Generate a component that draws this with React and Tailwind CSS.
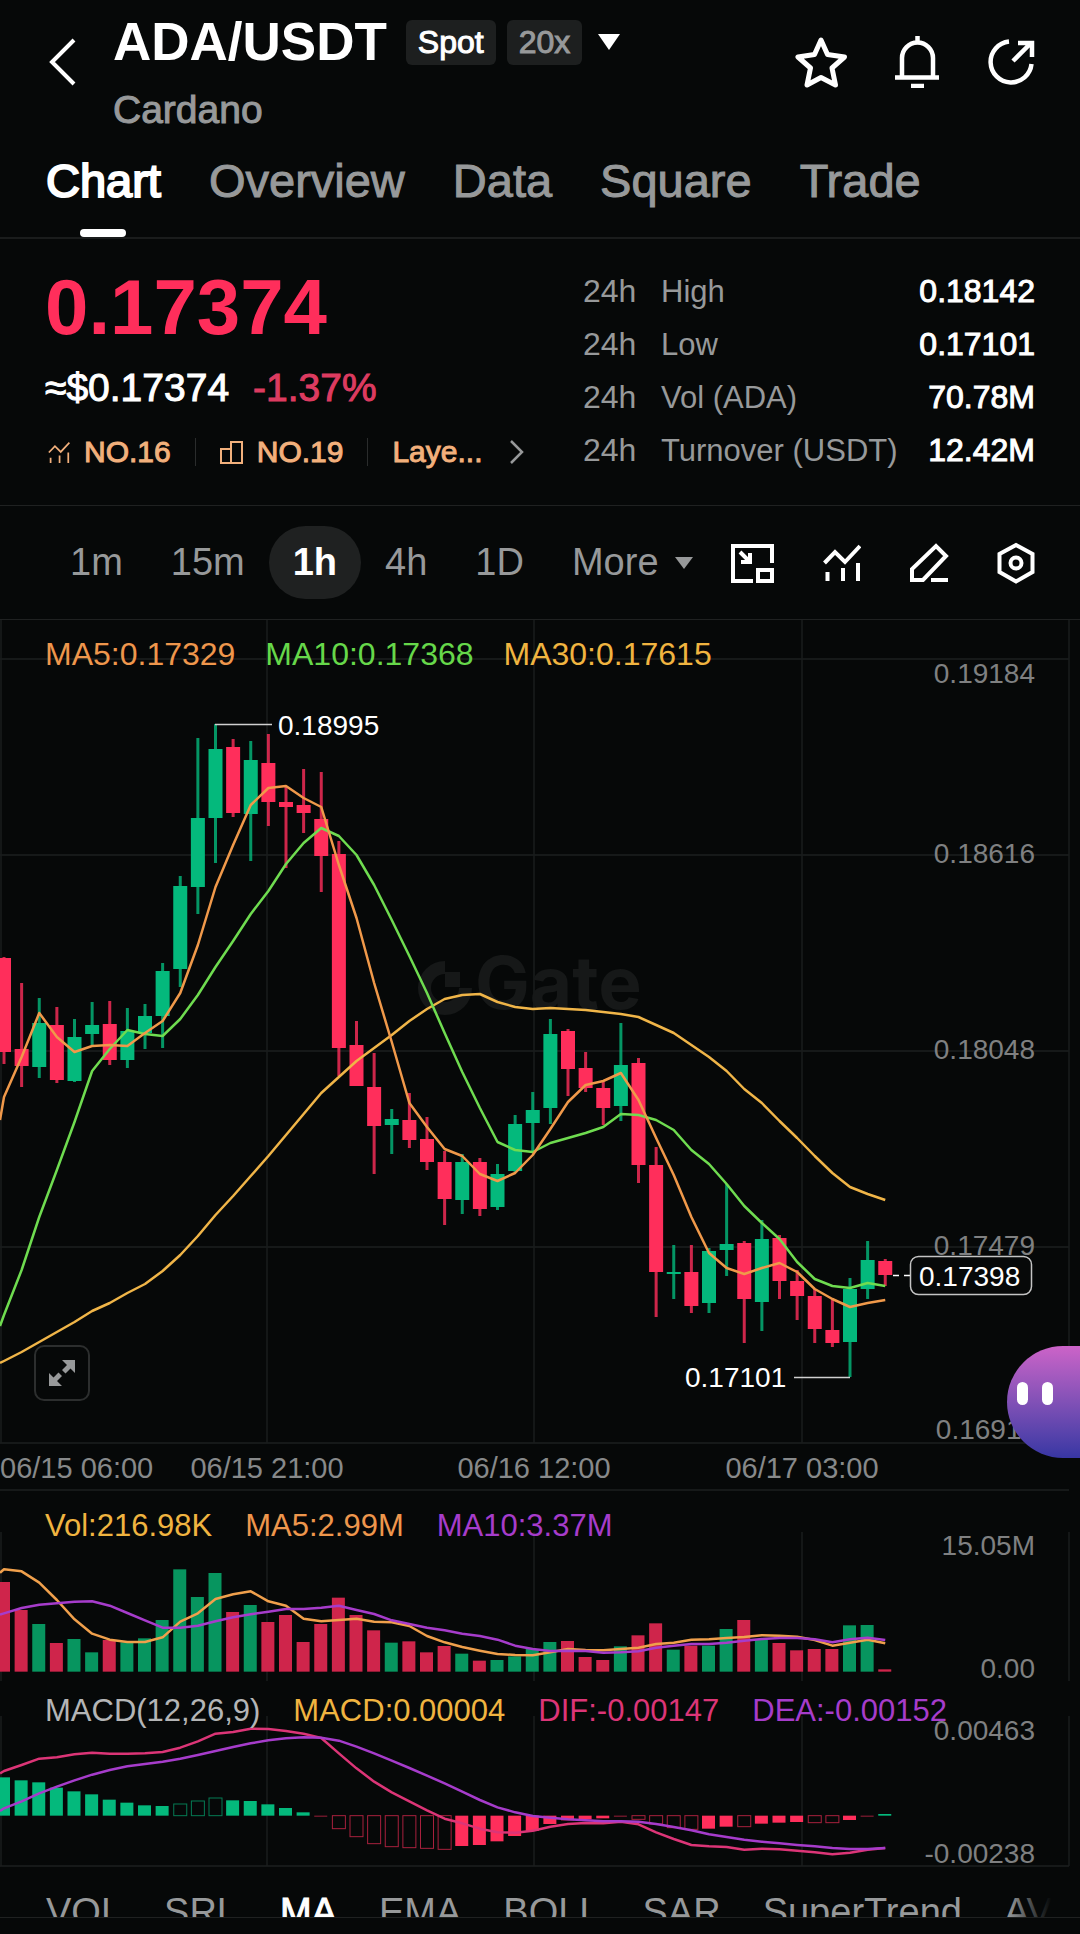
import { useState } from 'react'

const UP = '#04b97c'
const DOWN = '#ff2e5b'
const STEP = 17.625
const FIRST = 4

// [direction, high, body top, body bottom, low]
const candles = [
  ['d', 957, 958, 1052, 1064], ['d', 983, 1049, 1066, 1087], ['u', 998, 1023, 1067, 1078],
  ['d', 1007, 1025, 1080, 1083], ['u', 1019, 1037, 1081, 1082], ['u', 1002, 1025, 1034, 1045],
  ['d', 1001, 1024, 1060, 1065], ['u', 1008, 1031, 1060, 1068], ['u', 1004, 1016, 1033, 1049],
  ['u', 963, 971, 1016, 1048], ['u', 876, 886, 969, 987], ['u', 738, 818, 887, 914],
  ['u', 724, 749, 818, 863], ['d', 739, 747, 813, 817], ['u', 741, 760, 814, 861],
  ['d', 734, 763, 802, 826], ['d', 787, 802, 807, 868], ['d', 769, 805, 813, 833],
  ['d', 772, 819, 856, 892], ['d', 841, 854, 1048, 1076], ['d', 1021, 1045, 1086, 1086],
  ['d', 1053, 1087, 1126, 1174], ['u', 1109, 1119, 1125, 1154], ['d', 1093, 1120, 1140, 1148],
  ['d', 1117, 1139, 1162, 1170], ['d', 1151, 1162, 1199, 1225], ['u', 1154, 1162, 1200, 1214],
  ['d', 1158, 1162, 1209, 1216], ['u', 1164, 1174, 1207, 1210], ['u', 1115, 1124, 1171, 1172],
  ['u', 1092, 1110, 1123, 1153], ['u', 1019, 1034, 1108, 1124], ['d', 1029, 1031, 1069, 1096],
  ['d', 1052, 1068, 1088, 1092], ['d', 1082, 1088, 1108, 1125], ['u', 1023, 1065, 1106, 1121],
  ['d', 1058, 1063, 1165, 1183], ['d', 1147, 1165, 1272, 1317], ['u', 1245, 1272, 1274, 1299],
  ['d', 1245, 1272, 1306, 1313], ['u', 1248, 1251, 1303, 1313], ['u', 1184, 1244, 1250, 1276],
  ['d', 1241, 1243, 1299, 1343], ['u', 1220, 1239, 1302, 1331], ['d', 1235, 1238, 1281, 1299],
  ['d', 1270, 1281, 1296, 1320], ['d', 1289, 1296, 1329, 1343], ['d', 1298, 1330, 1343, 1347],
  ['u', 1278, 1289, 1342, 1377], ['u', 1241, 1260, 1289, 1299], ['d', 1259, 1261, 1275, 1286],
]

// each series starts with the point at the left edge
const ma5 = [1120, 1097, 1057, 1013, 1037, 1052, 1046, 1045, 1046, 1033, 1021, 993, 945, 887, 845, 805, 788, 786, 798, 807, 865, 918, 983, 1042, 1103, 1127, 1149, 1156, 1174, 1181, 1173, 1155, 1129, 1102, 1085, 1081, 1073, 1100, 1138, 1175, 1217, 1253, 1268, 1274, 1268, 1263, 1272, 1289, 1299, 1307, 1303, 1300]
const ma10 = [1326, 1315, 1270, 1217, 1170, 1122, 1071, 1049, 1030, 1034, 1036, 1019, 995, 967, 941, 914, 891, 864, 843, 828, 836, 855, 885, 920, 956, 993, 1033, 1072, 1108, 1142, 1150, 1152, 1143, 1138, 1133, 1127, 1114, 1115, 1120, 1130, 1150, 1164, 1184, 1206, 1223, 1239, 1262, 1279, 1286, 1288, 1283, 1286]
const ma30 = [1363, 1361, 1352, 1342, 1332, 1322, 1311, 1303, 1293, 1284, 1271, 1255, 1236, 1215, 1196, 1176, 1156, 1135, 1114, 1093, 1077, 1061, 1048, 1035, 1021, 1009, 999, 995, 994, 1002, 1007, 1009, 1008, 1009, 1010, 1012, 1014, 1017, 1025, 1033, 1045, 1057, 1071, 1089, 1103, 1121, 1138, 1156, 1173, 1187, 1194, 1200]

// the sub charts keep three units for one pixel
const volumes = [306, 390, 432, 489, 477, 517, 480, 487, 475, 420, 268, 351, 279, 396, 375, 426, 405, 486, 432, 353, 405, 451, 488, 484, 517, 498, 521, 542, 540, 529, 507, 486, 483, 531, 540, 499, 466, 430, 509, 497, 497, 447, 420, 478, 489, 511, 507, 507, 436, 435, 568]
const volMa5 = [278, 268, 274, 308, 360, 418, 461, 479, 486, 486, 472, 425, 400, 357, 343, 334, 364, 377, 416, 424, 420, 416, 425, 427, 438, 468, 487, 501, 512, 522, 525, 526, 517, 507, 510, 511, 507, 503, 492, 488, 479, 478, 474, 471, 466, 467, 470, 480, 497, 488, 479, 490]
const volMa10 = [404, 400, 384, 374, 370, 365, 364, 377, 399, 421, 443, 443, 437, 424, 412, 403, 395, 387, 387, 383, 377, 390, 402, 421, 432, 443, 451, 461, 468, 479, 497, 507, 513, 512, 513, 518, 517, 514, 503, 497, 492, 492, 488, 482, 477, 474, 474, 478, 487, 478, 473, 480]
const macd = [892, 901, 907, 923, 934, 943, 959, 968, 976, 978, 972, 963, 954, 961, 963, 973, 984, 997, 1010, 1046, 1070, 1091, 1100, 1103, 1105, 1108, 1098, 1095, 1084, 1068, 1053, 1032, 1021, 1018, 1015, 1010, 1018, 1032, 1043, 1048, 1046, 1040, 1040, 1031, 1028, 1026, 1028, 1028, 1020, 1010, 1002]
const hollow = [10, 11, 12, 19, 20, 21, 22, 23, 24, 25, 36, 37, 38, 39, 42, 46, 47]
const faint = [18, 35, 49]
const dif = [880, 873, 855, 836, 832, 823, 818, 821, 821, 820, 816, 803, 784, 761, 756, 746, 747, 753, 761, 774, 820, 865, 905, 937, 964, 991, 1016, 1030, 1046, 1057, 1058, 1052, 1040, 1032, 1029, 1030, 1025, 1033, 1057, 1077, 1095, 1099, 1101, 1109, 1106, 1108, 1112, 1117, 1123, 1118, 1109, 1104]
const dea = [993, 985, 964, 940, 920, 901, 884, 870, 859, 852, 845, 836, 825, 813, 801, 790, 781, 775, 772, 773, 782, 800, 820, 842, 864, 887, 910, 935, 960, 982, 997, 1008, 1013, 1018, 1021, 1024, 1024, 1025, 1032, 1041, 1051, 1063, 1071, 1079, 1085, 1090, 1095, 1099, 1104, 1107, 1107, 1104]

const gridX = [1, 267, 534, 802, 1069]

const cx = (i) => FIRST + i * STEP

const toPoints = (series, unit = 1) =>
  series.map((y, i) => `${i === 0 ? 0 : cx(i - 1)},${y / unit}`).join(' ')

function Line({ series, unit, color }) {
  return <polyline points={toPoints(series, unit)} fill="none" stroke={color} strokeWidth="2.5" strokeLinejoin="round" />
}

function VerticalGrid({ top, bottom }) {
  return gridX.map((x) => <line key={x} x1={x} x2={x} y1={top} y2={bottom} stroke="#1a1c1c" strokeWidth="1.5" />)
}

function AxisLabel({ y, children }) {
  return <text x="1035" y={y} textAnchor="end" fontSize="28" fill="#7f8081">{children}</text>
}

function Legend({ items, className }) {
  return (
    <div className={`absolute left-[45px] flex leading-10 whitespace-nowrap ${className}`}>
      {items.map(([text, color]) => (
        <span key={text} className={color}>{text}</span>
      ))}
    </div>
  )
}

function TrendIcon({ className, strokeWidth }) {
  return (
    <svg className={className} viewBox="0 0 38 38" fill="none" stroke="currentColor" strokeWidth={strokeWidth}>
      <path d="M1.5 19 12 8l10 10L37 2M4.5 28v9M20 24v13M35 19v18" />
    </svg>
  )
}

function Header() {
  return (
    <header className="flex items-start pt-[19px] pr-[45px] pl-[49px]">
      <button aria-label="Back" className="flex h-[86px] w-[64px] items-center">
        <svg className="h-[48px] w-[28px]" viewBox="0 0 28 48" fill="none" stroke="currentColor" strokeWidth="4">
          <path d="M25 2 3 24l22 22" />
        </svg>
      </button>
      <div className="flex-1">
        <button className="flex h-[46px] items-center gap-[11px]">
          <h1 className="mr-2 text-[53px] leading-[46px] font-bold">ADA/USDT</h1>
          <span className="rounded-md bg-[#1d1f1f] px-3 text-[32px] leading-[45px] [-webkit-text-stroke:1px]">Spot</span>
          <span className="rounded-md bg-[#1d1f1f] px-3 text-[32px] leading-[45px] text-[#97999a] [-webkit-text-stroke:1px]">20x</span>
          <svg className="ml-1 h-4 w-6" viewBox="0 0 24 16" fill="currentColor">
            <path d="M1 0h22L12 16z" />
          </svg>
        </button>
        <p className="mt-[21px] text-[39px] leading-[48px] text-[#97999a] [-webkit-text-stroke:1px]">Cardano</p>
      </div>
      <div className="flex h-[86px] items-center gap-[48px]">
        <button aria-label="Favorite">
          <svg className="h-[52px] w-[52px]" viewBox="0 0 52 52" fill="none" stroke="currentColor" strokeWidth="5" strokeLinejoin="round">
            <path d="M26 4l6.500 14.500 17 2.500-12.500 11 3.500 17L26 41.500 12 49l3.500-17L3 21l16.500-2.500z" />
          </svg>
        </button>
        <button aria-label="Alerts">
          <svg className="h-[52px] w-[44px]" viewBox="0 0 44 52" fill="none" stroke="currentColor" strokeWidth="4.500">
            <path d="M7 41V22a15.500 15.500 0 0 1 31 0v19M0 41.500h44M16 50h13M22.500 7V0" />
          </svg>
        </button>
        <button aria-label="Share">
          <svg className="h-[52px] w-[48px]" viewBox="0 0 48 52" fill="none" stroke="currentColor" strokeWidth="4.500">
            <path d="M22 5.500a20.500 20.500 0 1 0 22.500 22.500M26 25 43 8M31 7h14v14" />
          </svg>
        </button>
      </div>
    </header>
  )
}

function PageTabs() {
  const [active, setActive] = useState('Chart')
  return (
    <nav className="mt-[19px] flex gap-12 border-b-2 border-[#1a1c1c] pl-[46px] text-[47px] leading-[56px]">
      {['Chart', 'Overview', 'Data', 'Square', 'Trade'].map((tab) => (
        <button
          key={tab}
          onClick={() => setActive(tab)}
          className={tab === active ? 'text-white [-webkit-text-stroke:2px]' : 'text-[#97999a] [-webkit-text-stroke:1px]'}
        >
          {tab}
          <span className={`mx-auto mt-5 block h-2 w-[46px] rounded-full ${tab === active ? 'bg-white' : ''}`} />
        </button>
      ))}
    </nav>
  )
}

const stats = [
  ['High', '0.18142'],
  ['Low', '0.17101'],
  ['Vol (ADA)', '70.78M'],
  ['Turnover (USDT)', '12.42M'],
]

function Summary() {
  return (
    <section className="flex justify-between border-b border-[#1f2121] pr-[45px] pb-7 pl-[45px]">
      <div className="pt-7">
        <div className="text-[78px] leading-[80px] font-bold text-[#ff2e5b]">0.17374</div>
        <div className="mt-[17px] flex gap-6 text-[39px] leading-[48px] [-webkit-text-stroke:1px]">
          <span>≈$0.17374</span>
          <span className="text-[#dd3b60]">-1.37%</span>
        </div>
        <div className="mt-5 flex items-center text-[30px] leading-10 text-[#f2b07c] [-webkit-text-stroke:1px]">
          <button className="flex items-center gap-[14px] pl-[3px]">
            <TrendIcon className="h-[23px] w-[22px]" strokeWidth="3" />
            NO.16
          </button>
          <span className="mx-6 h-7 w-px bg-[#2a2c2c]" />
          <button className="flex items-center gap-[14px]">
            <svg className="h-[23px] w-[23px]" viewBox="0 0 23 23" fill="none" stroke="currentColor" strokeWidth="2">
              <path d="M11 22H1V8h10M11 1h11v21H11z" />
            </svg>
            NO.19
          </button>
          <span className="mx-6 h-7 w-px bg-[#2a2c2c]" />
          <button>Laye...</button>
          <button aria-label="More tags" className="ml-[26px] text-[#97999a]">
            <svg className="h-[26px] w-[16px]" viewBox="0 0 16 26" fill="none" stroke="currentColor" strokeWidth="2.500">
              <path d="m2 2 11 11L2 24" />
            </svg>
          </button>
        </div>
      </div>
      <dl className="w-[452px] pt-[26px] text-[32px] leading-[53px] whitespace-nowrap">
        {stats.map(([label, value]) => (
          <div key={label} className="flex justify-between">
            <dt className="flex text-[31px] text-[#97999a]">
              <span className="w-[78px] text-[32px]">24h</span>
              {label}
            </dt>
            <dd className="[-webkit-text-stroke:1px]">{value}</dd>
          </div>
        ))}
      </dl>
    </section>
  )
}

function Toolbar() {
  const [range, setRange] = useState('1h')
  return (
    <section className="flex items-center justify-between border-b border-[#1f2121] py-5 pr-[45px] pl-[46px]">
      <div className="flex text-[38px] leading-[73px] text-[#97999a]">
        {['1m', '15m', '1h', '4h', '1D'].map((item) => (
          <button
            key={item}
            onClick={() => setRange(item)}
            className={`rounded-full px-6 ${item === range ? 'bg-[#1f2121] font-bold text-white' : ''}`}
          >
            {item}
          </button>
        ))}
        <button className="flex items-center gap-4 pl-6">
          More
          <svg className="h-3 w-[18px]" viewBox="0 0 18 12" fill="currentColor">
            <path d="M0 0h18L9 12z" />
          </svg>
        </button>
      </div>
      <div className="flex items-center gap-12">
        <button aria-label="Picture in picture">
          <svg className="h-10 w-11" viewBox="0 0 44 40" fill="none" stroke="currentColor" strokeWidth="4">
            <path d="M22 38H2V3h39v17M27 27h14v11H27zM9 9l9 9M10 19h9V10" />
          </svg>
        </button>
        <button aria-label="Indicators">
          <TrendIcon className="h-[38px] w-[38px]" strokeWidth="4" />
        </button>
        <button aria-label="Draw">
          <svg className="h-10 w-10" viewBox="0 0 40 40" fill="none" stroke="currentColor" strokeWidth="4">
            <path d="M3 37V26L27 3l10 10-23 24zM22 37h17" />
          </svg>
        </button>
        <button aria-label="Chart settings">
          <svg className="h-[42px] w-[38px]" viewBox="0 0 38 42" fill="none" stroke="currentColor" strokeWidth="4">
            <path d="M19 3l16.500 9v18L19 39.500 2.500 30V12z" />
            <circle cx="19" cy="21" r="5.500" />
          </svg>
        </button>
      </div>
    </section>
  )
}

function PricePane() {
  return (
    <div className="relative">
      <svg className="block h-auto w-full" viewBox="0 620 1080 824">
        {[659, 855, 1051, 1247, 1443].map((y) => (
          <line key={y} x1="0" x2="1069" y1={y} y2={y} stroke="#1d1f1f" strokeWidth="1.500" />
        ))}
        <VerticalGrid top={620} bottom={1443} />

        {/* Watermark */}
        <g fill="#161818">
          <path d="M445 961v13a14 14 0 1 0 14 14h13a27 27 0 1 1-27-27z" />
          <path d="M445 972h15v15h-15z" />
          <text x="475" y="1009" fontSize="73" fontWeight="700" fontFamily="Inter, sans-serif">Gate</text>
        </g>

        <AxisLabel y={683}>0.19184</AxisLabel>
        <AxisLabel y={863}>0.18616</AxisLabel>
        <AxisLabel y={1059}>0.18048</AxisLabel>
        <AxisLabel y={1255}>0.17479</AxisLabel>
        <AxisLabel y={1439}>0.16911</AxisLabel>

        {candles.map(([dir, high, top, bottom, low], i) => (
          <g key={i} fill={dir === 'u' ? UP : DOWN}>
            <rect x={cx(i) - 1.5} y={high} width="3" height={low - high} opacity="0.8" />
            <rect x={cx(i) - 7} y={top} width="14" height={bottom - top} />
          </g>
        ))}

        <Line series={ma30} color="#f0b548" />
        <Line series={ma10} color="#6fdc50" />
        <Line series={ma5} color="#f0994a" />

        <path d="M215 724.500h57M794 1377.500h56" stroke="#d0d0d0" strokeWidth="1.500" />
        <path d="M893 1275.500h6M904 1275.500h6" stroke="#ffffff" strokeWidth="1.500" />
        <g fontSize="28" fill="#ffffff">
          <text x="278" y="735">0.18995</text>
          <text x="685" y="1387">0.17101</text>
          <rect x="910.500" y="1256.500" width="121" height="38" rx="8" fill="#070909" stroke="#c4c4c4" strokeWidth="1.500" />
          <text x="919" y="1286">0.17398</text>
        </g>
      </svg>
      <Legend
        className="top-[14px] gap-[30px] text-[32px]"
        items={[
          ['MA5:0.17329', 'text-[#ee964c]'],
          ['MA10:0.17368', 'text-[#66d84a]'],
          ['MA30:0.17615', 'text-[#f0b440]'],
        ]}
      />
      <button
        aria-label="Full screen"
        className="absolute bottom-[43px] left-[34px] flex h-14 w-14 items-center justify-center rounded-[10px] border-2 border-[#2c2e2e] bg-[#060808] text-[#97999a]"
      >
        <svg className="h-[26px] w-[26px]" viewBox="0 0 26 26" fill="currentColor">
          <path d="M13 0h13v13l-4.500-4.500-5 5-3.500-3.500 5-5zM13 26H0V13l4.500 4.500 5-5 3.500 3.500-5 5z" />
        </svg>
      </button>
      {/* Assistant bubble */}
      <button
        aria-label="Assistant"
        className="absolute right-0 bottom-[-14px] z-10 flex h-28 w-[73px] gap-[14px] rounded-l-full bg-linear-to-b from-[#cc63c8] to-[#3836a3] pt-9 pl-[10px]"
      >
        <span className="h-[23px] w-[11px] rounded-full bg-white" />
        <span className="h-[23px] w-[11px] rounded-full bg-white" />
      </button>
    </div>
  )
}

function TimeAxis() {
  return (
    <svg className="block h-auto w-full" viewBox="0 1444 1080 47" fontSize="29" fill="#87898a">
      <text x="0" y="1478">06/15 06:00</text>
      <g textAnchor="middle">
        <text x="267" y="1478">06/15 21:00</text>
        <text x="534" y="1478">06/16 12:00</text>
        <text x="802" y="1478">06/17 03:00</text>
      </g>
      <path d="M0 1490h1069" stroke="#1d1f1f" strokeWidth="1.500" />
    </svg>
  )
}

function VolumePane() {
  return (
    <div className="relative">
      <svg className="block h-auto w-full" viewBox="0 11 1080 190">
        <VerticalGrid top={52} bottom={201} />
        {volumes.map((y, i) => (
          <rect
            key={i}
            x={cx(i) - 7}
            y={y / 3}
            width="13"
            height={(575 - y) / 3}
            fill={candles[i][0] === 'u' ? '#07955f' : '#cf254b'}
          />
        ))}
        <Line series={volMa5} unit={3} color="#f0a04c" />
        <Line series={volMa10} unit={3} color="#a63ccb" />
        <AxisLabel y={75}>15.05M</AxisLabel>
        <AxisLabel y={198}>0.00</AxisLabel>
      </svg>
      <Legend
        className="top-[15px] gap-[33px] text-[31px]"
        items={[
          ['Vol:216.98K', 'text-[#f0b440]'],
          ['MA5:2.99M', 'text-[#ee964c]'],
          ['MA10:3.37M', 'text-[#a63ccb]'],
        ]}
      />
    </div>
  )
}

function MacdPane() {
  return (
    <div className="relative">
      <svg className="block h-auto w-full" viewBox="0 201 1080 186">
        <VerticalGrid top={236} bottom={386} />
        <path d="M0 386h1069" stroke="#1d1f1f" strokeWidth="1.500" />
        {macd.map((y, i) => {
          const top = Math.min(y, 1007) / 3
          const height = Math.max(Math.abs(y - 1007) / 3, 1)
          const color = y < 1007 ? UP : DOWN
          if (hollow.includes(i)) {
            return <rect key={i} x={cx(i) - 6.5} y={top} width="13" height={height} fill="none" stroke={color} strokeOpacity="0.65" />
          }
          return <rect key={i} x={cx(i) - 7} y={top} width="13" height={height} fill={color} opacity={faint.includes(i) ? 0.6 : 1} />
        })}
        <Line series={dif} unit={3} color="#dc3577" />
        <Line series={dea} unit={3} color="#a63ccb" />
        <AxisLabel y={260}>0.00463</AxisLabel>
        <AxisLabel y={383}>-0.00238</AxisLabel>
      </svg>
      <Legend
        className="top-[10px] gap-[33px] text-[31px]"
        items={[
          ['MACD(12,26,9)', 'text-[#b4b5b6]'],
          ['MACD:0.00004', 'text-[#f0b440]'],
          ['DIF:-0.00147', 'text-[#dc3577]'],
          ['DEA:-0.00152', 'text-[#a63ccb]'],
        ]}
      />
    </div>
  )
}

function IndicatorTabs() {
  const [active, setActive] = useState('MA')
  return (
    <div className="relative flex h-[51px] gap-[42px] overflow-hidden border-b border-[#1f2121] pt-[21px] pl-[46px] text-[38px] leading-[48px]">
      {['VOL', 'SRL', 'MA', 'EMA', 'BOLL', 'SAR', 'SuperTrend', 'AVL'].map((name) => (
        <button
          key={name}
          onClick={() => setActive(name)}
          className={`shrink-0 ${name === active ? 'text-white [-webkit-text-stroke:1px]' : 'text-[#97999a]'}`}
        >
          {name}
        </button>
      ))}
      <div className="absolute inset-y-0 right-0 w-[72px] bg-linear-to-l from-[#060808] from-40% to-transparent" />
    </div>
  )
}

export default function App() {
  return (
    <main className="min-h-screen overflow-hidden bg-[#060808] font-['Liberation_Sans',Arial,sans-serif] text-white">
      <Header />
      <PageTabs />
      <Summary />
      <Toolbar />
      <PricePane />
      <TimeAxis />
      <VolumePane />
      <MacdPane />
      <IndicatorTabs />
    </main>
  )
}
